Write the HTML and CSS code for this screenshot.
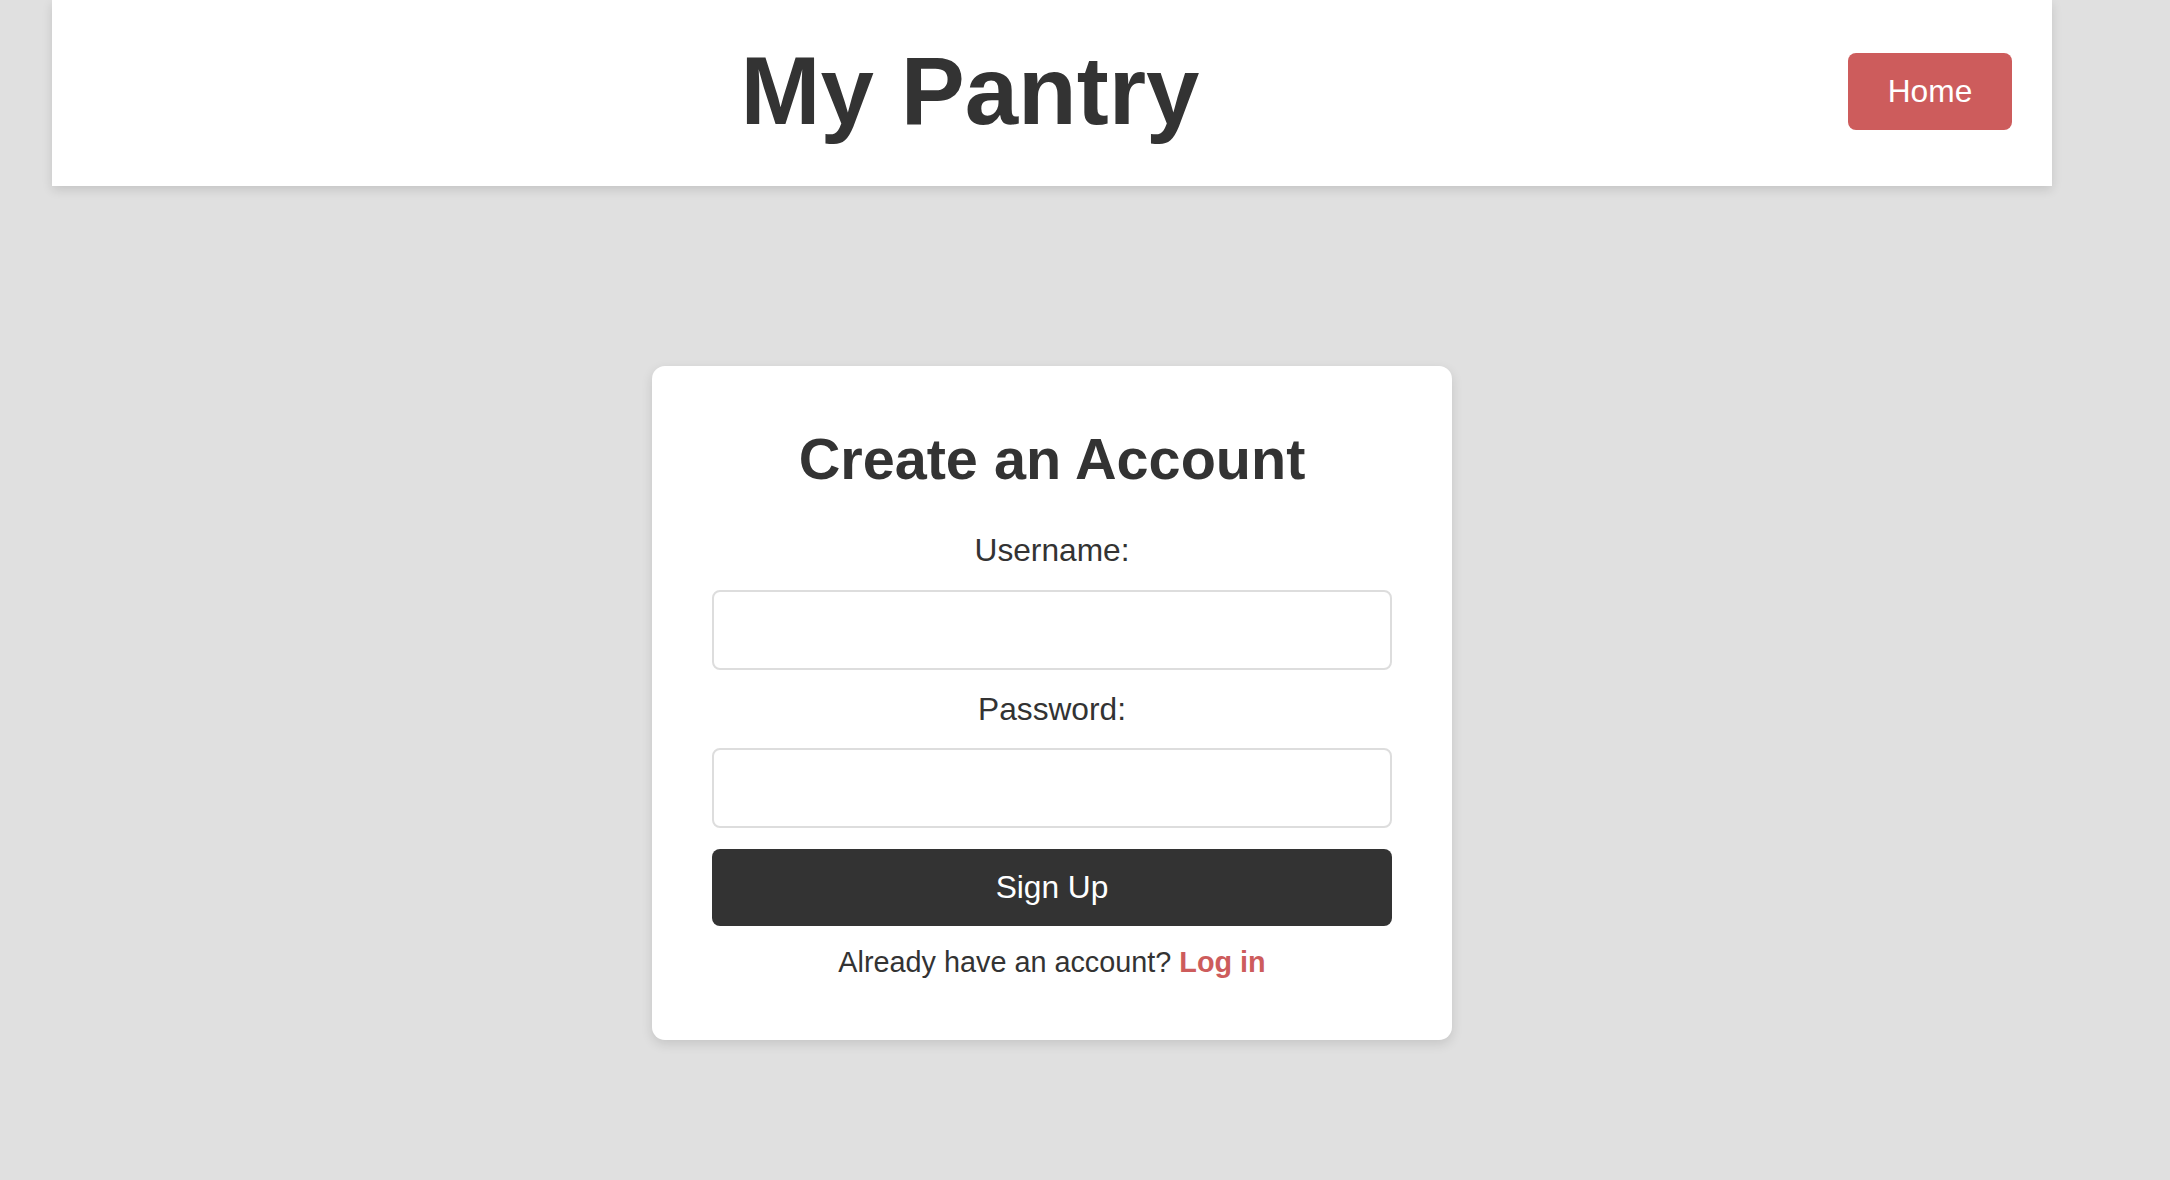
FILE: index.html
```html
<!DOCTYPE html>
<html lang="en">
<head>
<meta charset="utf-8">
<title>My Pantry - Sign Up</title>
<link rel="stylesheet" href="styles.css">
</head>
<body>
<div class="page">
  <header class="site-header">
    <h1 class="site-title">My Pantry</h1>
    <a class="home-btn" href="#">Home</a>
  </header>
  <main class="main">
    <section class="card">
      <h2 class="card-title">Create an Account</h2>
      <form class="form">
        <label class="label" for="username">Username:</label>
        <input class="input" id="username" type="text">
        <label class="label" for="password">Password:</label>
        <input class="input" id="password" type="password">
        <button class="submit" type="button">Sign Up</button>
      </form>
      <p class="alt">Already have an account? <a class="alt-link" href="#">Log in</a></p>
    </section>
  </main>
</div>
</body>
</html>
```

FILE: styles.css
```css
html, body {
  margin: 0;
  padding: 0;
}
body {
  background: #e0e0e0;
  font-family: "Liberation Sans", Arial, sans-serif;
  color: #333;
  font-size: 28.8px;
  min-height: 1180px;
}
.page {
  width: 2000px;
  margin-left: 52px;
}
.site-header {
  height: 186px;
  box-sizing: border-box;
  background: #fff;
  display: flex;
  align-items: center;
  padding: 0 40px;
  box-shadow: 0 4px 10px rgba(0, 0, 0, 0.12);
}
.site-title {
  flex: 1;
  margin: 0;
  text-align: center;
  font-size: 96px;
  font-weight: bold;
  color: #333;
  line-height: 1.1;
  margin-top: -4px;
}
.home-btn {
  display: block;
  width: 164px;
  height: 77px;
  box-sizing: border-box;
  line-height: 77px;
  text-align: center;
  background: #cd5c5c;
  color: #fff;
  text-decoration: none;
  font-size: 31.7px;
  border-radius: 8px;
  margin-top: -3px;
}
.main {
  display: flex;
  justify-content: center;
  padding-top: 180px;
}
.card {
  width: 800px;
  box-sizing: border-box;
  background: #fff;
  border-radius: 13px;
  padding: 60px 60px 61px;
  box-shadow: 0 4px 12px rgba(0, 0, 0, 0.12);
  text-align: center;
}
.card-title {
  margin: 0 0 40px;
  font-size: 57.6px;
  font-weight: bold;
  color: #333;
}
.form {
  display: flex;
  flex-direction: column;
  gap: 20.8px;
}
.label {
  font-size: 31.7px;
  color: #333;
}
.input {
  height: 80px;
  box-sizing: border-box;
  width: 100%;
  margin: 0;
  border: 2px solid #ddd;
  border-radius: 8px;
  background: #fff;
  font-size: 28.8px;
  padding: 0 16px;
}
.submit {
  height: 77px;
  width: 100%;
  margin: 0;
  border: none;
  border-radius: 8px;
  background: #333;
  color: #fff;
  font-family: "Liberation Sans", Arial, sans-serif;
  font-size: 31.7px;
}
.alt {
  margin: 20px 0 0;
  font-size: 28.8px;
  color: #333;
}
.alt-link {
  color: #cd5c5c;
  font-weight: bold;
  text-decoration: none;
}
```
